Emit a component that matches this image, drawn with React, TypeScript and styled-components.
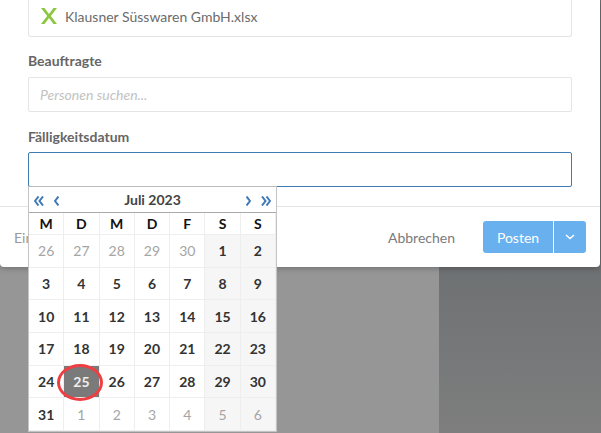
import React from 'react';
import styled, { createGlobalStyle } from 'styled-components';

const Global = createGlobalStyle`
  html, body { margin: 0; padding: 0; width: 601px; height: 433px; overflow: hidden; }
  body { font-family: Lato, "Liberation Sans", sans-serif; color: #555; }
`;
const Page = styled.div`
  position: relative; width: 601px; height: 433px; overflow: hidden;
  display: grid; grid-template-columns: 439px 162px;
`;
const LeftPanel = styled.div`background: #969696;`;
const RightPanel = styled.div`background: linear-gradient(180deg, #6e7173 266px, #7e7e7e 100%);`;
const Modal = styled.div`
  position: absolute; left: 0; top: 0; width: 600px; height: 267px; background: #fff;
  border-radius: 0 0 4px 4px; box-shadow: 0 1px 6px rgba(0,0,0,.28);
  display: flex; flex-direction: column;
`;
const Body = styled.div`
  height: 207px; box-sizing: border-box; padding: 0 28px; display: flex; flex-direction: column;
  border-bottom: 1px solid #e3e3e3;
`;
const FileBox = styled.div`
  height: 37px; box-sizing: border-box; border: 1px solid #e4e4e4; border-top: none; border-radius: 0 0 3px 3px;
  display: flex; align-items: center; gap: 8px; padding: 0 0 4px 12px; font-size: 14px; color: #6b6b6b;
`;
const Label = styled.label`
  display: block; font-size: 14px; font-weight: 700; color: #666; line-height: 17px; margin: 15px 0 8px;
`;
const DateLabel = styled(Label)`margin: 16px 0 7px;`;
const Field = styled.div<{ $focus?: boolean }>`
  height: 35px; box-sizing: border-box; border-radius: 2px;
  border: 1px solid ${p => (p.$focus ? '#3e7cb1' : '#e4e4e4')};
  padding: 0 11px; display: flex; align-items: center;
  font-size: 14px; font-style: italic; color: #c2c2c2;
`;
const Footer = styled.div`
  flex: 1; display: flex; align-items: center; padding: 0 14px;
`;
const Hint = styled.span`font-size: 14px; color: #999;`;
const Cancel = styled.span`margin-left: auto; margin-right: 28px; font-size: 14px; color: #7b7b7b;`;
const SplitButton = styled.div`
  display: flex; height: 32px; border-radius: 3px; overflow: hidden; background: #69b0ee; color: #fff; font-size: 14px;
`;
const Main = styled.div`width: 70px; display: flex; align-items: center; justify-content: center; border-right: 1px solid #fff;`;
const Caret = styled.div`width: 32px; display: flex; align-items: center; justify-content: center;`;
const Calendar = styled.div`
  position: absolute; left: 28px; top: 186px; width: 249px; height: 246px; box-sizing: border-box;
  background: #fff; border: 1px solid #c4c4c4; border-top-color: #bbb;
  display: flex; flex-direction: column;
`;
const CalHead = styled.div`
  height: 26px; flex: none; box-sizing: border-box; border-bottom: 1px solid #aaa;
  display: flex; align-items: center; padding: 3px 5px 0;
`;
const NavIcon = styled.svg`flex: none; display: block; fill: none; stroke: #3d78b8; stroke-width: 2;`;
const NavGroup = styled.div`width: 38px; display: flex; align-items: center; gap: 10px;`;
const NavGroupEnd = styled(NavGroup)`justify-content: flex-end;`;
const Month = styled.span`flex: 1; text-align: center; font-size: 14px; font-weight: 700; color: #444; margin-top: -3px;`;
const Grid = styled.div`
  flex: 1; display: grid; grid-template-columns: repeat(7, 1fr);
  grid-template-rows: 22px repeat(6, 1fr);
`;
const Cell = styled.div<{ $head?: boolean; $muted?: boolean; $weekend?: boolean; $selected?: boolean }>`
  display: flex; align-items: center; justify-content: center; position: relative;
  z-index: ${p => (p.$selected ? 1 : 0)};
  border-right: 1px solid #eee; border-bottom: 1px solid #eee;
  font-size: 14px; font-weight: ${p => (p.$muted ? 400 : 700)};
  color: ${p => (p.$head ? '#111' : p.$muted ? '#a5a5a5' : p.$selected ? '#eee' : '#333')};
  background: ${p => (p.$selected ? '#7a7a7a' : p.$weekend ? '#f6f6f6' : '#fff')};
`;
const Ring = styled.span`
  position: absolute; left: -7px; top: -2px; width: 46px; height: 37px; box-sizing: border-box;
  border: 3.5px solid #ef3e42; border-radius: 50%;
`;

const heads = ['M', 'D', 'M', 'D', 'F', 'S', 'S'];
const days: [number, boolean][] = [
  ...[26, 27, 28, 29, 30].map((d): [number, boolean] => [d, true]),
  ...Array.from({ length: 31 }, (_, i): [number, boolean] => [i + 1, false]),
  ...[1, 2, 3, 4, 5, 6].map((d): [number, boolean] => [d, true]),
];

export default function App() {
  return (
    <Page>
      <Global />
      <LeftPanel />
      <RightPanel />
      <Modal>
        <Body>
          <FileBox>
            <svg width="16" height="16" viewBox="0 0 16 16">
              <path d="M0 0h3.5L8 6 12.5 0H16L9.8 8 16 16h-3.5L8 10 3.5 16H0l6.2-8z" fill="#8cc63f" />
            </svg>
            Klausner Süsswaren GmbH.xlsx
          </FileBox>
          <Label>Beauftragte</Label>
          <Field>Personen suchen...</Field>
          <DateLabel>Fälligkeitsdatum</DateLabel>
          <Field $focus />
        </Body>
        <Footer>
          <Hint>Ein</Hint>
          <Cancel>Abbrechen</Cancel>
          <SplitButton>
            <Main>Posten</Main>
            <Caret>
              <svg width="10" height="6" viewBox="0 0 10 6" fill="none" stroke="#fff" strokeWidth="1.5">
                <path d="M1 1l4 3.5L9 1" />
              </svg>
            </Caret>
          </SplitButton>
        </Footer>
      </Modal>
      <Calendar>
        <CalHead>
          <NavGroup>
            <NavIcon width="10" height="10" viewBox="0 0 10 10"><path d="M4.5 .5 1 5l3.5 4.5M9 .5 5.5 5 9 9.5" /></NavIcon>
            <NavIcon width="5" height="10" viewBox="0 0 5 10"><path d="M4.5 .5 1 5l3.5 4.5" /></NavIcon>
          </NavGroup>
          <Month>Juli 2023</Month>
          <NavGroupEnd>
            <NavIcon width="5" height="10" viewBox="0 0 5 10"><path d="M.5 .5 4 5 .5 9.5" /></NavIcon>
            <NavIcon width="10" height="10" viewBox="0 0 10 10"><path d="M1 .5 4.5 5 1 9.5M5.5 .5 9 5 5.5 9.5" /></NavIcon>
          </NavGroupEnd>
        </CalHead>
        <Grid>
          {heads.map((h, i) => <Cell key={i} $head>{h}</Cell>)}
          {days.map(([d, muted], i) => {
            const selected = !muted && d === 25;
            return (
              <Cell key={i} $muted={muted} $weekend={i % 7 >= 5} $selected={selected}>
                {d}
                {selected && <Ring />}
              </Cell>
            );
          })}
        </Grid>
      </Calendar>
    </Page>
  );
}
